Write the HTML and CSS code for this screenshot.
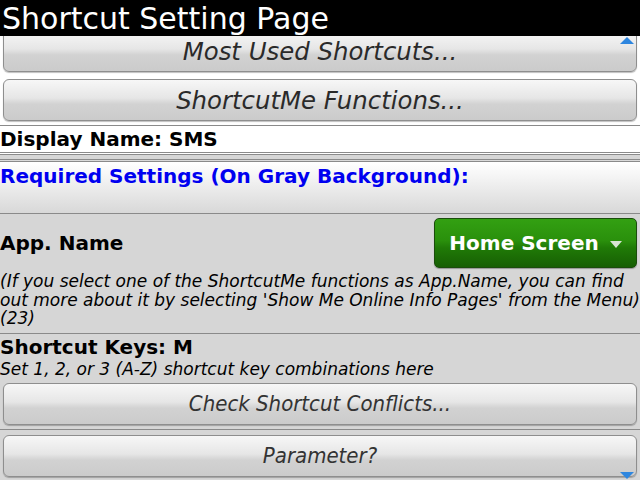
FILE: index.html
```html
<!DOCTYPE html>
<html lang="en">
<head>
  <meta charset="UTF-8" />
  <meta name="viewport" content="width=device-width, initial-scale=1.0"/>
  <title>Shortcut Setting Page</title>
  <link rel="stylesheet" href="styles.css">
</head>
<body>
  <!-- Title bar -->
  <header class="titlebar">Shortcut Setting Page</header>

  <!-- Scrolling screen -->
  <main class="screen">
    <section class="top">
      <button class="btn big first">Most Used Shortcuts...</button>
      <button class="btn big">ShortcutMe Functions...</button>
    </section>

    <div class="display-name">Display Name: SMS</div>

    <div class="required">Required Settings (On Gray Background):</div>

    <section class="gray">
      <div class="app-row">
        <span class="label">App. Name</span>
        <button class="choice">Home Screen <span class="caret"></span></button>
      </div>
      <p class="note">(If you select one of the ShortcutMe functions as App.Name, you can find<br>out more about it by selecting 'Show Me Online Info Pages' from the Menu)<br>(23)</p>

      <div class="keys">
        <div class="label">Shortcut Keys: M</div>
        <div class="hint">Set 1, 2, or 3 (A-Z) shortcut key combinations here</div>
        <button class="btn">Check Shortcut Conflicts...</button>
      </div>

      <div class="param">
        <button class="btn">Parameter?</button>
      </div>
    </section>

    <span class="scroll up"></span>
    <span class="scroll down"></span>
  </main>
</body>
</html>
```

FILE: styles.css
```css
body {
  margin: 0;
  width: 640px;
  height: 480px;
  overflow: hidden;
  font-family: "DejaVu Sans", "Liberation Sans", sans-serif;
  background: #d6d6d6;
  color: #000;
}

/* Title bar */
.titlebar {
  position: relative;
  z-index: 2;
  height: 36px;
  line-height: 37px;
  padding-left: 2px;
  font-size: 30px;
  color: #fff;
  background: #000;
}

.screen {
  position: relative;
  height: 444px;
  overflow: hidden;
}

/* Gray-gradient push buttons */
.btn {
  display: block;
  width: 634px;
  height: 42px;
  margin: 0 3px;
  padding: 0;
  border: 1px solid #8e8e8e;
  border-radius: 6px;
  background: linear-gradient(#f7f7f7, #e6e6e6 45%, #d2d2d2 60%, #cbcbcb);
  box-shadow: 0 1px 1px rgba(0,0,0,0.25);
  font-family: "DejaVu Sans Condensed", "DejaVu Sans", sans-serif;
  font-size: 22px;
  font-style: italic;
  color: #333;
}

.btn.big {
  font-family: "DejaVu Sans", sans-serif;
  font-size: 24.4px;
  color: #2a2a2a;
}

.top {
  background: #fff;
  padding-bottom: 4px;
  border-bottom: 1px solid #8a8a8a;
}

.top .first {
  margin-top: -6px;
  margin-bottom: 7px;
}

.display-name {
  background: #fff;
  height: 26px;
  line-height: 26px;
  font-size: 20px;
  font-weight: bold;
  border-bottom: 3px double #8a8a8a;
  margin-bottom: 4px;
}

.required {
  height: 48px;
  padding-top: 3px;
  line-height: 22px;
  font-size: 20px;
  font-weight: bold;
  color: #0000f0;
  border-top: 3px double #8a8a8a;
  border-bottom: 1px solid #8a8a8a;
  background: linear-gradient(#fff, #f4f4f4 30%, #d8d8d8);
}

/* Gray section */
.app-row {
  display: flex;
  justify-content: space-between;
  align-items: center;
  padding-top: 4px;
}

.label {
  font-size: 20px;
  font-weight: bold;
  line-height: 22px;
}

.choice {
  width: 203px;
  height: 50px;
  margin-right: 3px;
  border: 1px solid #1b4d0c;
  border-radius: 5px;
  background: linear-gradient(#33a012, #2a900c 45%, #207a07 60%, #175f04);
  box-shadow: 0 1px 1px rgba(0,0,0,0.3);
  font-family: inherit;
  font-size: 20px;
  font-weight: bold;
  color: #fff;
}

.caret {
  display: inline-block;
  margin-left: 4px;
  vertical-align: middle;
  border-left: 6px solid transparent;
  border-right: 6px solid transparent;
  border-top: 7px solid #d8e4d4;
}

.note {
  margin: 4px 0 0;
  padding-bottom: 5px;
  font-size: 17px;
  font-style: italic;
  line-height: 18.5px;
  white-space: nowrap;
  border-bottom: 1px solid #8a8a8a;
}

.keys {
  padding-top: 2px;
  padding-bottom: 4px;
  border-bottom: 1px solid #8a8a8a;
}

.hint {
  font-size: 17px;
  font-style: italic;
  line-height: 20px;
  padding-top: 1px;
  margin-bottom: 4px;
}

.param {
  padding-top: 5px;
}

/* Scroll indicators */
.scroll {
  position: absolute;
  right: 6px;
  width: 0;
  height: 0;
  border-left: 7px solid transparent;
  border-right: 7px solid transparent;
}

.scroll.up {
  top: 1px;
  border-bottom: 7px solid #2e86df;
}

.scroll.down {
  bottom: 1px;
  border-top: 7px solid #2e86df;
}
```
